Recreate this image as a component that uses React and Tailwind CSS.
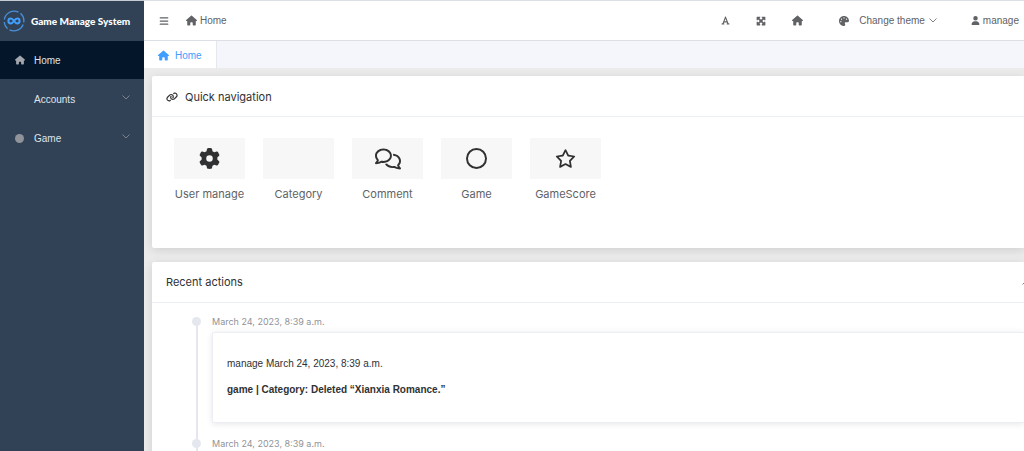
import React, { useState } from "react";
import {
    FaBars,
    FaFont,
    FaGear,
    FaHouse,
    FaLink,
    FaMaximize,
    FaPalette,
    FaRegCircle,
    FaRegComments,
    FaRegStar,
    FaUser,
} from "react-icons/fa6";

const menus = [
    { name: "Home", icon: <FaHouse size={10} /> },
    { name: "Accounts", icon: null, children: true },
    { name: "Game", icon: <span className="h-[9px] w-[9px] rounded-full bg-[#909399]" />, children: true },
];

const quick = [
    { name: "User manage", icon: <FaGear size={21} /> },
    { name: "Category", icon: null },
    { name: "Comment", icon: <FaRegComments size={26} /> },
    { name: "Game", icon: <FaRegCircle size={21} /> },
    { name: "GameScore", icon: <FaRegStar size={21} /> },
];

const actions = [
    { id: 1, user: "manage", time: "March 24, 2023, 8:39 a.m.", text: "game | Category: Deleted “Xianxia Romance.”" },
    { id: 2, user: "manage", time: "March 24, 2023, 8:39 a.m.", text: "game | Category: Deleted “Xianxia Romance.”" },
];

function Chevron({ className, up }) {
    return (
        <svg className={className} width="8" height="5" viewBox="0 0 8 5" fill="none" stroke="currentColor" strokeWidth="0.8">
            <path d={up ? "M0.5 4.5 L4 1 L7.5 4.5" : "M0.5 0.5 L4 4 L7.5 0.5"} />
        </svg>
    );
}

function Logo() {
    return (
        <svg width="22" height="22" viewBox="0 0 22 22" fill="none" stroke="#4a90d9">
            <path strokeWidth="1.3" d="M1.3 9.5 A10 10 0 0 1 15.5 2.1 M17.5 3.3 A10 10 0 0 1 20.7 12.5 M20.2 14.5 A10 10 0 0 1 6.5 19.9 M4.5 18.7 A10 10 0 0 1 1.2 12" />
            <path
                stroke="#409eff"
                strokeWidth="2"
                d="M11 11 C9.8 9.3 8.8 8.6 7.8 8.6 A2.4 2.4 0 0 0 7.8 13.4 C8.8 13.4 9.8 12.7 11 11 C12.2 9.3 13.2 8.6 14.2 8.6 A2.4 2.4 0 0 1 14.2 13.4 C13.2 13.4 12.2 12.7 11 11 Z"
            />
        </svg>
    );
}

function Card({ title, icon, extra, children }) {
    return (
        <section className="rounded-l-xs bg-white shadow-[0_2px_10px_rgba(0,0,0,0.12)]">
            <header className="flex h-[41px] items-center border-b border-[#ebeef5] pt-0.5 pl-3.5">
                {icon}
                <h2 className="font-['Inter',sans-serif] text-[11px] text-[#303133]">{title}</h2>
                {extra}
            </header>
            {children}
        </section>
    );
}

export default function App() {
    const [active, setActive] = useState("Home");

    return (
        <div className="flex min-h-screen overflow-hidden bg-[#ebebeb] font-['Liberation_Sans',sans-serif] text-[10px] text-[#606266]">
            <aside className="w-36 shrink-0 border-t border-[#c5cbd1] bg-[#314257] text-[#dfe4ea]">
                <div className="flex h-10 items-center gap-1.5 pl-[3px]">
                    <Logo />
                    <h1 className="font-['Lato',sans-serif] text-[10px] font-black whitespace-nowrap text-white">Game Manage System</h1>
                </div>
                <nav className="flex flex-col gap-px">
                    {menus.map((m) => (
                        <button
                            key={m.name}
                            type="button"
                            onClick={() => setActive(m.name)}
                            className={`flex h-[38px] w-full items-center pr-3.5 pl-[15px] text-left ${active === m.name ? "bg-[#04172a]" : ""}`}
                        >
                            <span className="flex w-[19px] shrink-0 text-[#a3a6ad]">{m.icon}</span>
                            <span className="grow">{m.name}</span>
                            {m.children && <Chevron className="mb-1 text-[#909399]" />}
                        </button>
                    ))}
                </nav>
            </aside>

            <div className="min-w-0 grow">
                <header className="flex h-[41px] items-center border-t border-b border-[#dcdfe6] bg-white pr-[5px] pl-[15px]">
                    <button type="button" aria-label="Toggle menu">
                        <FaBars size={10} />
                    </button>
                    <a href="#" className="ml-[17px] flex items-center gap-[3px]">
                        <FaHouse size={11} />
                        Home
                    </a>
                    <div className="ml-auto flex items-center">
                        <button type="button" aria-label="Font size" className="mr-[26px]">
                            <FaFont size={9} />
                        </button>
                        <button type="button" aria-label="Full screen" className="mr-[26px]">
                            <FaMaximize size={10} />
                        </button>
                        <a href="#" aria-label="Go home" className="mr-9">
                            <FaHouse size={11} />
                        </a>
                        <button type="button" className="mr-[34px] flex items-center">
                            <FaPalette size={10} />
                            <span className="mr-1 ml-2.5">Change theme</span>
                            <Chevron />
                        </button>
                        <button type="button" className="flex items-center gap-[3px]">
                            <FaUser size={9} />
                            manage
                        </button>
                    </div>
                </header>

                <div className="flex h-[27px] bg-[#f4f6fb]">
                    <a href="#" className="flex w-[73px] items-center gap-1.5 border-r border-[#e4e7ed] bg-white pt-0.5 pl-3.5 text-[#409eff]">
                        <FaHouse size={11} />
                        Home
                    </a>
                </div>

                <main className="flex flex-col gap-3.5 pt-2 pl-2">
                    <Card title="Quick navigation" icon={<FaLink size={12} className="mr-[7px] text-[#303133]" />}>
                        <div className="flex gap-[18px] px-[22px] pt-[21px] pb-[45px]">
                            {quick.map((q) => (
                                <a
                                    key={q.name}
                                    href="#"
                                    className="flex w-[71px] flex-col items-center gap-[7px] font-['Inter',sans-serif] text-[11px] whitespace-nowrap"
                                >
                                    <span className="flex h-[41px] w-full items-center justify-center bg-[#f7f7f7] text-[#303133]">{q.icon}</span>
                                    {q.name}
                                </a>
                            ))}
                        </div>
                    </Card>

                    <Card
                        title="Recent actions"
                        extra={
                            <button type="button" aria-label="Collapse" className="-mr-1.5 ml-auto">
                                <Chevron up />
                            </button>
                        }
                    >
                        <ul className="pt-[11px] pl-10">
                            {actions.map((a) => (
                                <li key={a.id} className="flex gap-[11px]">
                                    <div className="flex w-[9px] shrink-0 flex-col items-center pt-[3px]">
                                        <span className="h-[9px] w-[9px] shrink-0 rounded-full bg-[#e4e7ed]" />
                                        <span className="-mb-[3px] w-0.5 grow bg-[#e4e7ed]" />
                                    </div>
                                    <div className="grow pb-[13px]">
                                        <time className="block font-['Inter',sans-serif] text-[9px] leading-4 text-[#909399]">{a.time}</time>
                                        <div className="mt-0.5 rounded-l-xs border border-r-0 border-[#ebeef5] bg-white px-3.5 pt-[23px] pb-6 text-[#303133] shadow-[0_1px_6px_rgba(0,0,0,0.1)]">
                                            <p className="leading-4">
                                                {a.user} {a.time}
                                            </p>
                                            <h4 className="mt-2.5 leading-4 font-bold">{a.text}</h4>
                                        </div>
                                    </div>
                                </li>
                            ))}
                        </ul>
                    </Card>
                </main>
            </div>
        </div>
    );
}
